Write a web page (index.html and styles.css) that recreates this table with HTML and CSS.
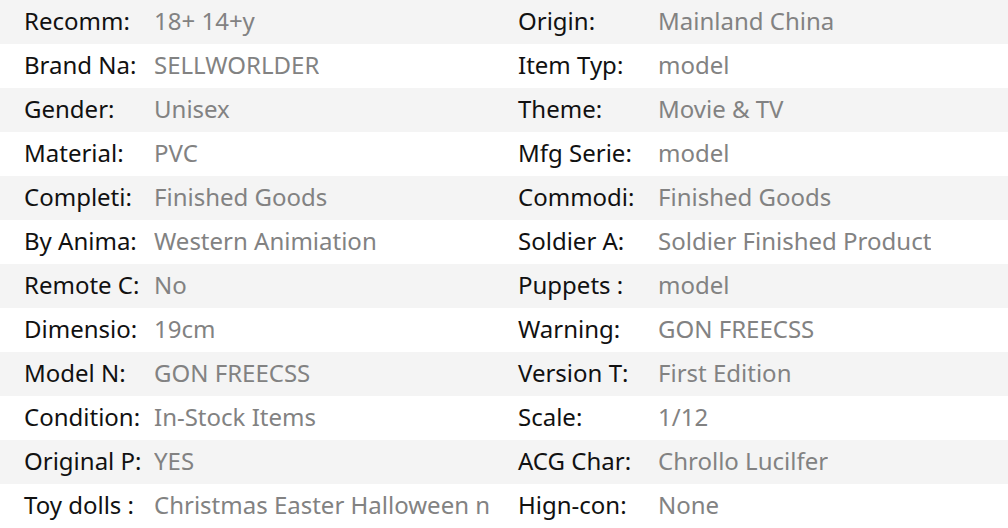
FILE: index.html
```html
<!DOCTYPE html>
<html>
<head>
<meta charset="utf-8">
<link rel="stylesheet" href="styles.css">
</head>
<body>
<div class="table">
  <div class="row"><div class="cell left"><span class="label">Recomm:</span><span class="value">18+ 14+y</span></div><div class="cell right"><span class="label">Origin:</span><span class="value">Mainland China</span></div></div>
  <div class="row"><div class="cell left"><span class="label">Brand Na:</span><span class="value">SELLWORLDER</span></div><div class="cell right"><span class="label">Item Typ:</span><span class="value">model</span></div></div>
  <div class="row"><div class="cell left"><span class="label">Gender:</span><span class="value">Unisex</span></div><div class="cell right"><span class="label">Theme:</span><span class="value">Movie &amp; TV</span></div></div>
  <div class="row"><div class="cell left"><span class="label">Material:</span><span class="value">PVC</span></div><div class="cell right"><span class="label">Mfg Serie:</span><span class="value">model</span></div></div>
  <div class="row"><div class="cell left"><span class="label">Completi:</span><span class="value">Finished Goods</span></div><div class="cell right"><span class="label">Commodi:</span><span class="value">Finished Goods</span></div></div>
  <div class="row"><div class="cell left"><span class="label">By Anima:</span><span class="value">Western Animiation</span></div><div class="cell right"><span class="label">Soldier A:</span><span class="value">Soldier Finished Product</span></div></div>
  <div class="row"><div class="cell left"><span class="label">Remote C:</span><span class="value">No</span></div><div class="cell right"><span class="label">Puppets :</span><span class="value">model</span></div></div>
  <div class="row"><div class="cell left"><span class="label">Dimensio:</span><span class="value">19cm</span></div><div class="cell right"><span class="label">Warning:</span><span class="value">GON FREECSS</span></div></div>
  <div class="row"><div class="cell left"><span class="label">Model N:</span><span class="value">GON FREECSS</span></div><div class="cell right"><span class="label">Version T:</span><span class="value">First Edition</span></div></div>
  <div class="row"><div class="cell left"><span class="label">Condition:</span><span class="value">In-Stock Items</span></div><div class="cell right"><span class="label">Scale:</span><span class="value">1/12</span></div></div>
  <div class="row"><div class="cell left"><span class="label">Original P:</span><span class="value">YES</span></div><div class="cell right"><span class="label">ACG Char:</span><span class="value">Chrollo Lucilfer</span></div></div>
  <div class="row"><div class="cell left"><span class="label">Toy dolls :</span><span class="value">Christmas Easter Halloween n</span></div><div class="cell right"><span class="label">Hign-con:</span><span class="value">None</span></div></div>
</div>
</body>
</html>
```
FILE: styles.css
```css
html, body {
  margin: 0;
  padding: 0;
  background: #ffffff;
}
body {
  width: 1008px;
  height: 528px;
  overflow: hidden;
  font-family: "Noto Sans", "Open Sans", sans-serif;
  font-size: 24px;
}
.table {
  display: flex;
  flex-direction: column;
}
.row {
  display: flex;
  height: 44px;
}
.row:nth-child(odd) {
  background: #f4f4f4;
}
.cell {
  display: flex;
  align-items: center;
  height: 100%;
  padding-bottom: 4px;
  box-sizing: border-box;
  overflow: hidden;
  white-space: nowrap;
}
.left {
  width: 494px;
  padding-left: 24px;
}
.right {
  width: 514px;
  padding-left: 24px;
}
.label {
  color: #111111;
  flex: none;
}
.left .label { width: 130px; }
.right .label { width: 140px; }
.value {
  color: #828282;
  overflow: hidden;
}
```
